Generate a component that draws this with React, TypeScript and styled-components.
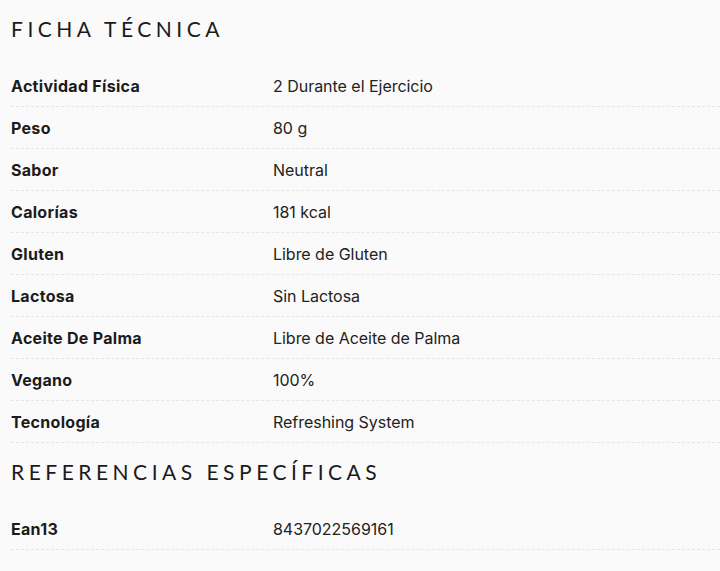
import React from "react";
import styled, { createGlobalStyle } from "styled-components";

const Global = createGlobalStyle`
  html, body { margin: 0; padding: 0; background: #fafafa; }
  body { font-family: "Inter", "Noto Sans", sans-serif; color: #1b1b1b; }
`;

const Page = styled.div`
  width: 720px;
  min-height: 571px;
  box-sizing: border-box;
  padding-left: 11px;
  background: #fafafa;
`;

const Heading = styled.h2`
  margin: 0;
  height: 65px;
  display: flex;
  align-items: center;
  padding-bottom: 8px;
  box-sizing: border-box;
  font-family: "Lato", "Noto Sans", sans-serif;
  font-size: 21px;
  font-weight: 400;
  letter-spacing: 4.5px;
  color: #1b1b1b;
`;

const Table = styled.div`
  display: flex;
  flex-direction: column;
`;

const Row = styled.div`
  display: grid;
  grid-template-columns: 262px 1fr;
  align-items: center;
  height: 42px;
  box-sizing: border-box;
  border-bottom: 1px dashed #e6e6e6;
  font-size: 16px;
`;

const Label = styled.div`
  font-weight: 700;
  letter-spacing: 0.3px;
`;

const Value = styled.div`
  font-weight: 400;
  letter-spacing: -0.03px;
  color: #222;
`;

const ficha: [string, string][] = [
  ["Actividad Física", "2 Durante el Ejercicio"],
  ["Peso", "80 g"],
  ["Sabor", "Neutral"],
  ["Calorías", "181 kcal"],
  ["Gluten", "Libre de Gluten"],
  ["Lactosa", "Sin Lactosa"],
  ["Aceite De Palma", "Libre de Aceite de Palma"],
  ["Vegano", "100%"],
  ["Tecnología", "Refreshing System"],
];

const refs: [string, string][] = [["Ean13", "8437022569161"]];

export default function App() {
  return (
    <>
      <Global />
      <Page>
        <Heading>FICHA TÉCNICA</Heading>
        <Table>
          {ficha.map(([k, v]) => (
            <Row key={k}>
              <Label>{k}</Label>
              <Value>{v}</Value>
            </Row>
          ))}
        </Table>
        <Heading>REFERENCIAS ESPECÍFICAS</Heading>
        <Table>
          {refs.map(([k, v]) => (
            <Row key={k}>
              <Label>{k}</Label>
              <Value>{v}</Value>
            </Row>
          ))}
        </Table>
      </Page>
    </>
  );
}
